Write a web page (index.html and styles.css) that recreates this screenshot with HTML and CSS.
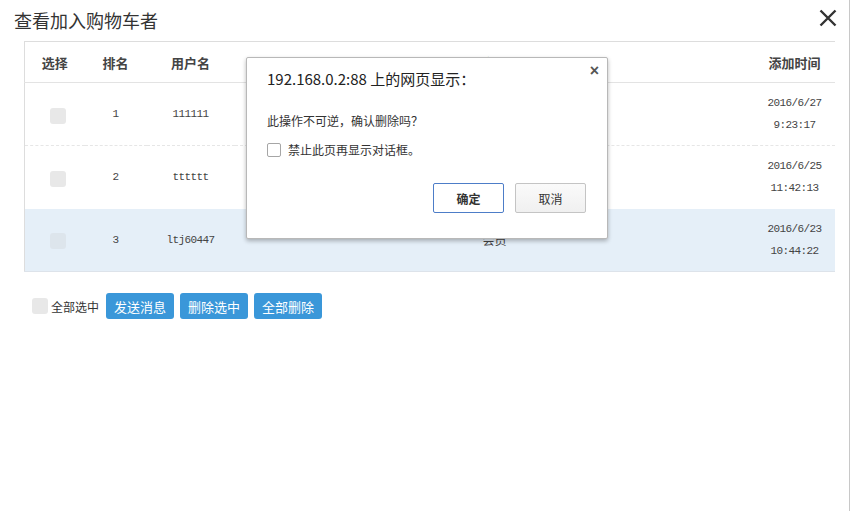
FILE: index.html
```html
<!doctype html>
<html>
  <head>
    <meta charset='utf-8'>
    <title>查看加入购物车者</title>
    <link rel="stylesheet" href="styles.css">
  </head>
  <body>

    <div id='main'>
      <div class='top'>
        <span class='title'>查看加入购物车者</span>
        <span class='close'>
          <svg width='18' height='18' viewBox='0 0 18 18'><path d='M1.5 1.5 L16.5 16.5 M16.5 1.5 L1.5 16.5' stroke='#333' stroke-width='2.4'/></svg>
        </span>
      </div>

      <table class='list'>
        <colgroup>
          <col style='width:60px'><col style='width:62px'><col style='width:88px'><col style='width:520px'><col style='width:80px'>
        </colgroup>
        <thead>
          <tr>
            <th>选择</th><th>排名</th><th>用户名</th><th>用户类型</th><th>添加时间</th>
          </tr>
        </thead>
        <tbody>
          <tr>
            <td><span class='box'></span></td>
            <td class='mono'>1</td>
            <td class='mono'>111111</td>
            <td>会员</td>
            <td class='mono'>2016/6/27<br>9:23:17</td>
          </tr>
          <tr>
            <td><span class='box'></span></td>
            <td class='mono'>2</td>
            <td class='mono'>tttttt</td>
            <td>会员</td>
            <td class='mono'>2016/6/25<br>11:42:13</td>
          </tr>
          <tr class='on'>
            <td><span class='box'></span></td>
            <td class='mono'>3</td>
            <td class='mono'>ltj60447</td>
            <td>会员</td>
            <td class='mono'>2016/6/23<br>10:44:22</td>
          </tr>
        </tbody>
      </table>

      <div class='actions'>
        <label class='all'><span class='box'></span>全部选中</label>
        <button>发送消息</button>
        <button>删除选中</button>
        <button>全部删除</button>
      </div>
    </div>

    <div class='dialog'>
      <div class='dlg-title'>192.168.0.2:88 上的网页显示：</div>
      <span class='dlg-x'>×</span>
      <div class='dlg-msg'>此操作不可逆，确认删除吗？</div>
      <label class='dlg-check'><span class='cb'></span>禁止此页再显示对话框。</label>
      <div class='dlg-btns'>
        <button class='ok'>确定</button>
        <button>取消</button>
      </div>
    </div>

  </body>
</html>
```

FILE: styles.css
```css
*{
  box-sizing: border-box;
}

body {
  margin: 0;
  background: #fff;
  font-family: 'Noto Sans CJK SC', 'Liberation Sans', sans-serif;
  color: #333;
  font-size: 12px;
}

#main {
  width: 850px;
  height: 511px;
  border-right: 1px solid #c8c8c8;
}

.top {
  height: 41px;
  display: flex;
  justify-content: space-between;
  align-items: center;
  padding: 0 12px 0 14px;
}

.title {
  font-size: 18px;
  color: #333;
  margin-top: -2px;
}

.close {
  display: flex;
  margin-top: -5px;
}

.list {
  margin-left: 24px;
  width: 810px;
  table-layout: fixed;
  border-collapse: collapse;
  border-top: 1px solid #ddd;
  border-left: 1px solid #ddd;
  border-bottom: 1px solid #dde3ea;
}

.list th {
  height: 41px;
  font-size: 13px;
  font-weight: bold;
  color: #444;
  border-bottom: 1px solid #e3e3e3;
  text-align: center;
  padding: 0;
}

.list td {
  height: 63px;
  text-align: center;
  padding: 0;
  line-height: 22px;
  color: #444;
}

.list tbody tr + tr td {
  border-top: 1px dashed #e6e6e6;
}

.list tr.on td {
  background: #e5eff8;
  border-top: none;
}

.mono {
  font-family: 'Liberation Mono', monospace;
  font-size: 11px;
  letter-spacing: -0.6px;
  color: #3a3a3a;
}

.list td:first-child {
  padding-left: 6px;
}

.box {
  display: inline-block;
  width: 16px;
  height: 16px;
  border-radius: 3px;
  background: #e8e8e8;
  vertical-align: middle;
}

.list tr.on .box {
  background: #dde5ec;
}

.actions {
  display: flex;
  align-items: center;
  padding: 21px 0 0 32px;
  gap: 6px;
}

.all {
  display: flex;
  align-items: center;
  font-size: 12px;
  color: #333;
  gap: 3px;
  margin-right: 1px;
}

.all .box {
  width: 16px;
  height: 16px;
}

.actions button {
  border: none;
  background: #3a97d9;
  color: #fff;
  font-family: inherit;
  font-size: 13px;
  height: 26px;
  width: 68px;
  border-radius: 3px;
  padding: 0;
}

.dialog {
  position: absolute;
  left: 246px;
  top: 57px;
  width: 362px;
  height: 182px;
  background: #fff;
  border: 1px solid #b8b8b8;
  border-radius: 2px;
  box-shadow: 0 2px 4px rgba(0, 0, 0, 0.28);
  padding: 11px 20px 0 20px;
}

.dlg-title {
  font-size: 15px;
  color: #222;
  line-height: 20px;
}

.dlg-x {
  position: absolute;
  right: 8px;
  top: 4px;
  font-size: 16px;
  color: #555;
  font-family: 'Liberation Sans', sans-serif;
  font-weight: bold;
}

.dlg-msg {
  margin-top: 24px;
  font-size: 12px;
  color: #333;
  line-height: 16px;
}

.dlg-check {
  display: flex;
  align-items: center;
  gap: 7px;
  margin-top: 12px;
  font-size: 12px;
  color: #333;
}

.cb {
  display: inline-block;
  width: 14px;
  height: 14px;
  border: 1px solid #a6a6a6;
  border-radius: 2px;
  background: #fff;
}

.dlg-btns {
  display: flex;
  justify-content: flex-end;
  gap: 11px;
  margin-top: 25px;
  margin-right: 1px;
}

.dlg-btns button {
  width: 71px;
  height: 30px;
  font-family: inherit;
  font-size: 12px;
  color: #333;
  background: linear-gradient(#fafafa, #f0f0f0);
  border: 1px solid #c4c4c4;
  border-radius: 2px;
  padding: 0;
}

.dlg-btns button.ok {
  border-color: #4d7dc8;
  font-weight: bold;
  background: #fff;
}
```
